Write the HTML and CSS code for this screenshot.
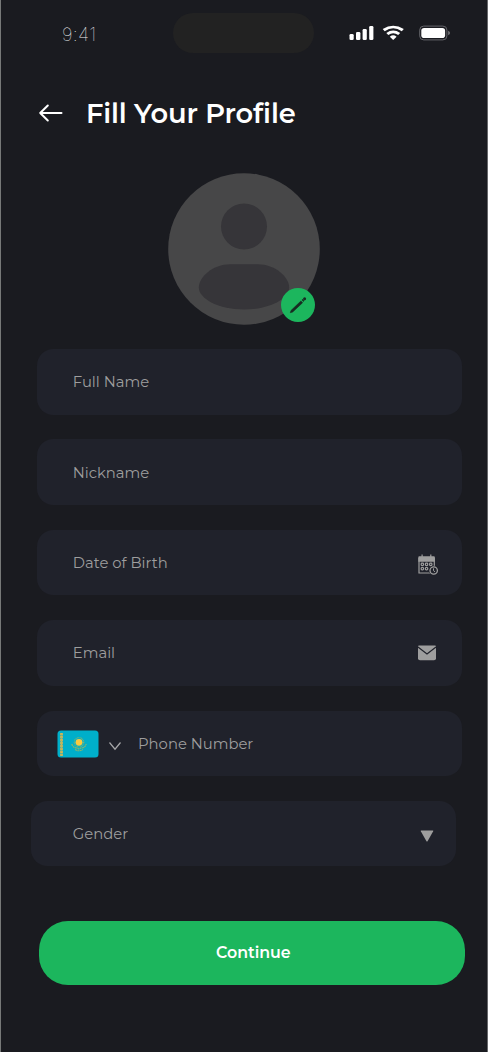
FILE: index.html
```html
<!DOCTYPE html>
<html lang="en">
<head>
<meta charset="utf-8">
<title>Fill Your Profile</title>
<link rel="stylesheet" href="styles.css">
</head>
<body>
<main class="screen">
  <div class="status">
    <span class="time">9:41</span>
    <div class="island"></div>
    <svg class="signals" width="104" height="18" viewBox="0 0 104 18">
      <g fill="#fff">
        <rect x="1.5" y="9" width="4.2" height="6" rx="1.3"/>
        <rect x="8" y="7" width="4.4" height="8" rx="1.3"/>
        <rect x="14.6" y="4" width="4.2" height="11" rx="1.3"/>
        <rect x="21.2" y="1" width="4.2" height="14" rx="1.3"/>
        <path d="M36.700 6.200 34.700 4Q45.200 -2.400 55.800 4L53.800 6.200Q45.200 .500 36.700 6.200Z"/>
        <path d="M40.300 10 38.300 7.900Q45.200 3 52.200 7.900L50.200 10Q45.200 6.400 40.300 10Z"/>
        <path d="M45.200 15 41.800 11.700Q45.200 8.800 48.600 11.700Z"/>
      </g>
      <rect x="71.700" y="1.100" width="27.200" height="13.800" rx="4" fill="none" stroke="#65656a"/>
      <rect x="73.300" y="3" width="23.800" height="10" rx="2.800" fill="#fff"/>
      <path d="M100.200 5.700Q102 6.400 102 8T100.200 10.300Z" fill="#77777b"/>
    </svg>
  </div>
  <header class="header">
    <svg class="back" width="26" height="20" viewBox="0 0 26 20" fill="none" stroke="#fff" stroke-width="2" stroke-linecap="round" stroke-linejoin="round"><path d="M23.500 10H2.200M9.800 2.500 2.200 10l7.600 7.500"/></svg>
    <h1 class="title">Fill Your Profile</h1>
  </header>
  <div class="avatar">
    <svg width="152" height="152" viewBox="0 0 152 152">
      <circle cx="76" cy="76" r="75.800" fill="#474748"/>
      <circle cx="76" cy="53.500" r="23" fill="#363539"/>
      <path d="M62 91.300H90C107 91.300 121.200 104 121.200 114.500C121.200 125 103 136.500 76 136.500S30.800 125 30.800 114.500C30.800 104 45 91.300 62 91.300Z" fill="#363539"/>
    </svg>
    <span class="edit">
      <svg width="34" height="34" viewBox="0 0 34 34"><path d="m9.300 24.700.7-2.200 9.900-9.500 1.700 1.700-9.900 9.300ZM20.900 12l.7-.7 1.500 1.500-.7.7Z" fill="#182b22" stroke="#182b22" stroke-width=".600" stroke-linejoin="round"/><circle cx="23.600" cy="10.700" r="1.500" fill="#182b22"/></svg>
    </span>
  </div>
  <form class="fields">
    <div class="field"><span class="label">Full Name</span></div>
    <div class="field"><span class="label">Nickname</span></div>
    <div class="field"><span class="label">Date of Birth</span>
      <svg class="icon calendar" width="22" height="22" viewBox="0 0 22 22">
        <path d="M2 4.500H17.300V19H2Z" fill="none" stroke="#9e9e9e" stroke-width="1.200"/>
        <path d="M1.300 3.200Q1.300 2.200 2.300 2.200H4.500V.500H5.700V2.200H13.200V.500H14.400V2.200H16.800Q17.900 2.200 17.900 3.200V7.700H1.300Z" fill="#9e9e9e"/>
        <g fill="none" stroke="#9e9e9e" stroke-width="1.200"><rect x="4.200" y="9.200" width="2.300" height="2.400" rx=".8"/><rect x="8.400" y="9.200" width="2.300" height="2.400" rx=".8"/><rect x="12.600" y="9.200" width="2.300" height="2.400" rx=".8"/><rect x="4.200" y="13.500" width="2.300" height="2.400" rx=".8"/><rect x="8.400" y="13.500" width="2.300" height="2.400" rx=".8"/></g>
        <circle cx="16.700" cy="16.500" r="4.800" fill="#20222b"/><circle cx="16.700" cy="16.500" r="3.700" fill="none" stroke="#9e9e9e" stroke-width="1.300"/><path d="M16.500 14.300V16.700L18 17.800" fill="none" stroke="#9e9e9e"/>
      </svg>
    </div>
    <div class="field"><span class="label">Email</span>
      <svg class="icon mail" width="20" height="16" viewBox="0 0 20 16"><path d="M2 .400H18Q19 .500 19 1.600V13.500Q19 15.300 17 15.300H3Q1 15.300 1 13.500V1.600Q1 .500 2 .400Z" fill="#9e9e9e"/><path d="m1 2 9 7 9-7" fill="none" stroke="#20222b" stroke-width="1.200"/></svg>
    </div>
    <div class="field phone">
      <svg class="flag" width="42" height="28" viewBox="0 0 42 28">
        <rect x=".500" y=".500" width="41" height="27" rx="3.500" fill="#00afca"/>
        <path d="M4.500 3V26" stroke="#b5b465" stroke-width="3" stroke-dasharray="2.600 .400"/>
        <path d="M4.500 3V26" stroke="#d5b851" stroke-width="1" stroke-dasharray="1.200 1.500"/>
        <circle cx="22" cy="12.300" r="4.700" fill="none" stroke="#84b56e" stroke-width="1.200" stroke-dasharray=".700 .700"/>
        <circle cx="22" cy="12.300" r="3.400" fill="#fdc93e"/>
        <path d="M14.800 14Q16 18 20 18L22 19 24 18Q28 18 29.200 14M18 19.500Q22 22 26 19.500" fill="none" stroke="#86b56d" stroke-width="1.200" stroke-dasharray="2 .500"/>
      </svg>
      <svg class="chevron" width="14" height="10" viewBox="0 0 14 10"><path d="m1.500 1.500 5.500 6.700 5.500-6.700" fill="none" stroke="#a8a8aa" stroke-width="1.200"/></svg>
      <span class="label">Phone Number</span>
    </div>
    <div class="field gender"><span class="label">Gender</span>
      <svg class="icon triangle" width="14" height="12" viewBox="0 0 14 12"><path d="M1.200 .500H12.800Q13.500 .500 13.200 1.200L7.700 11Q7 12.200 6.300 11L.800 1.200Q.500 .500 1.200 .500Z" fill="#9e9e9e"/></svg>
    </div>
  </form>
  <button class="continue" type="button">Continue</button>
</main>
</body>
</html>
```
FILE: styles.css
```css
* { box-sizing: border-box; }
body { margin: 0; background: #1a1b20; font-family: Montserrat, Inter, sans-serif; }
.screen { height: 1052px; overflow: hidden; background: #1a1b20; border-left: 1px solid #777978; border-right: 1px solid #66676a; padding-left: 1px; }
.status { display: flex; align-items: flex-start; height: 66px; padding-top: 12.500px; }
.time { width: 111px; margin: 10px 0 0 60px; color: #f0f0f2; font: 100 18.500px/23px Inter, sans-serif; letter-spacing: .3px; }
.island { width: 141px; height: 40.500px; border-radius: 21px; background: #222; }
.signals { margin: 12px 0 0 34px; }
.header { display: flex; align-items: center; height: 94px; padding: 0 0 0 35.500px; }
.back { flex: none; }
.title { margin: 2px 0 0 22.500px; color: #fff; font-size: 27.300px; line-height: 34px; font-weight: 600; letter-spacing: -.1px; white-space: nowrap; }
.avatar { position: relative; width: 152px; height: 152px; margin: 12.500px 0 0 166px; }
.avatar svg { display: block; }
.edit { position: absolute; left: 113px; top: 115.500px; width: 34px; height: 34px; border-radius: 50%; background: #1cb65d; }
.fields { display: flex; flex-direction: column; gap: 24.900px; margin: 24.500px 0 0 35.300px; width: 424.700px; }
.field { display: flex; align-items: center; height: 65.500px; padding: 0 24.500px 0 35.500px; border-radius: 16.500px; background: #20222b; }
.label { margin-top: 1px; color: #9e9e9e; font-size: 14.800px; line-height: 20px; white-space: nowrap; }
.icon { margin-left: auto; flex: none; }
.calendar { margin-top: 5px; margin-right: -2px; }
.phone { padding-left: 19.700px; }
.flag { margin-top: 2px; }
.chevron { margin: 5px 16px 0 9px; }
.gender { width: 424.700px; margin-left: -6px; padding-left: 41.500px; padding-right: 22px; }
.triangle { margin-top: 5px; }
.continue { display: flex; align-items: center; justify-content: center; width: 426px; height: 64.500px; margin: 54.300px 0 0 37.300px; padding: 0 0 0 2px; border: 0; border-radius: 29px; background: #1cb65d; color: #fff; font: 600 15.800px/22px Montserrat, Inter, sans-serif; }
```
